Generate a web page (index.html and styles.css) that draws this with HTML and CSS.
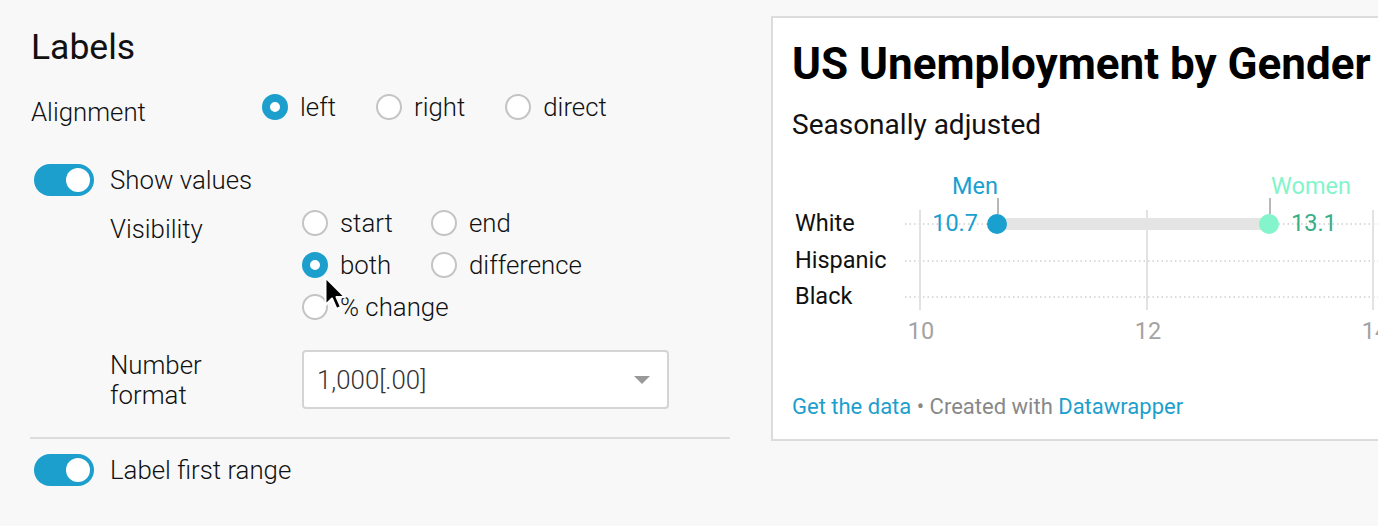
FILE: index.html
```html
<!DOCTYPE html>
<html>
<head>
<meta charset="utf-8">
<link rel="stylesheet" href="styles.css">
</head>
<body>
<div class="page">
  <div class="left">
    <h2 class="section-title">Labels</h2>
    <div class="align-row">
      <div class="field-label">Alignment</div>
      <div class="radio-line">
        <span class="radio checked"></span><span class="opt">left</span>
        <span class="radio"></span><span class="opt">right</span>
        <span class="radio"></span><span class="opt">direct</span>
      </div>
    </div>
    <div class="toggle-row">
      <span class="toggle"><span class="knob"></span></span>
      <span class="toggle-text">Show values</span>
    </div>
    <div class="sub">
      <div class="vis-row">
        <div class="sub-label vis-label">Visibility</div>
        <div class="radio-grid">
          <div class="ropt"><span class="radio"></span><span class="opt">start</span></div>
          <div class="ropt"><span class="radio"></span><span class="opt">end</span></div>
          <div class="ropt"><span class="radio checked"></span><span class="opt">both</span></div>
          <div class="ropt"><span class="radio"></span><span class="opt">difference</span></div>
          <div class="ropt"><span class="radio"></span><span class="opt">% change</span></div>
        </div>
      </div>
      <div class="num-row">
        <div class="sub-label num-label">Number<br>format</div>
        <div class="select">
          <span class="select-text">1,000[.00]</span>
          <span class="caret"></span>
        </div>
      </div>
    </div>
    <div class="divider"></div>
    <div class="toggle-row second">
      <span class="toggle"><span class="knob"></span></span>
      <span class="toggle-text">Label first range</span>
    </div>
  </div>

  <div class="panel">
    <h1 class="chart-title">US Unemployment by Gender</h1>
    <div class="chart-sub">Seasonally adjusted</div>
    <svg class="chart" width="620" height="180" viewBox="0 0 620 180">
      <g class="grid-h">
        <line x1="113" y1="59" x2="620" y2="59"/>
        <line x1="113" y1="96" x2="620" y2="96"/>
        <line x1="113" y1="132" x2="620" y2="132"/>
      </g>
      <g class="grid-v">
        <line x1="128" y1="45" x2="128" y2="145"/>
        <line x1="355" y1="45" x2="355" y2="145"/>
        <line x1="581" y1="45" x2="581" y2="145"/>
      </g>
      <g class="row-labels">
        <text x="3" y="66">White</text>
        <text x="3" y="103">Hispanic</text>
        <text x="3" y="139">Black</text>
      </g>
      <g class="axis">
        <text x="129" y="174">10</text>
        <text x="356" y="174">12</text>
        <text x="583" y="174">14</text>
      </g>
      <line class="range" x1="205" y1="59" x2="477" y2="59"/>
      <line class="tick" x1="206" y1="33" x2="206" y2="49"/>
      <line class="tick" x1="478" y1="33" x2="478" y2="49"/>
      <circle class="dot-men" cx="205" cy="59" r="10"/>
      <circle class="dot-women" cx="477" cy="59" r="10"/>
      <text class="val-men" x="186" y="66">10.7</text>
      <text class="val-women" x="499" y="66">13.1</text>
      <text class="lab-men" x="206" y="29">Men</text>
      <text class="lab-women" x="479" y="29">Women</text>
    </svg>
    <div class="chart-foot"><span class="link">Get the data</span> • Created with <span class="link">Datawrapper</span></div>
  </div>
</div>
<svg class="cursor" width="26" height="40" viewBox="0 0 26 40">
  <path d="M1.5 1.5 L1.5 29 L8 22.5 L12.5 33 L17 31 L12.5 21 L21 21 Z" fill="#000" stroke="#fff" stroke-width="2" stroke-linejoin="round"/>
</svg>
</body>
</html>
```

FILE: styles.css
```css
html, body {
  margin: 0;
  padding: 0;
  overflow: hidden;
  background: #f8f8f8;
  font-family: Roboto, "Liberation Sans", sans-serif;
  color: #1a1a1a;
}

.page {
  display: flex;
  align-items: flex-start;
  width: 1500px;
}

.left {
  width: 700px;
  margin-left: 30px;
  padding-top: 27px;
  font-weight: 300;
  color: #111;
}

.section-title {
  margin: 0 0 0 1px;
  font-size: 35.5px;
  line-height: 40px;
  font-weight: 400;
  color: #111;
}

.align-row {
  display: flex;
  margin-top: 20px;
  margin-left: 1px;
  height: 40px;
}

.field-label {
  width: 231px;
  font-size: 25.8px;
  line-height: 40px;
  padding-top: 5px;
  box-sizing: border-box;
}

.radio-line {
  display: flex;
  align-items: center;
  height: 40px;
}

.radio {
  display: inline-block;
  width: 26px;
  height: 26px;
  box-sizing: border-box;
  border: 2px solid #c4c4c4;
  border-radius: 50%;
  background: #fff;
  flex: none;
}

.radio.checked {
  border: 8px solid #1d9fcd;
  background: #fff;
}

.opt {
  font-size: 25.8px;
  margin-left: 12px;
  margin-right: 40px;
  white-space: nowrap;
}

.toggle-row {
  display: flex;
  align-items: center;
  margin-top: 37px;
  margin-left: 4px;
  height: 32px;
}

.toggle-row.second {
  margin-top: 15px;
}

.toggle {
  width: 60px;
  height: 32px;
  border-radius: 16px;
  background: #1d9fcd;
  display: flex;
  align-items: center;
  justify-content: flex-end;
  padding-right: 4px;
  box-sizing: border-box;
}

.knob {
  width: 24px;
  height: 24px;
  border-radius: 50%;
  background: #fff;
}

.toggle-text {
  font-size: 25.8px;
  margin-left: 16px;
}

.sub {
  margin-left: 80px;
  margin-top: 6px;
}

.vis-row {
  display: flex;
}

.sub-label {
  width: 192px;
  font-size: 25.8px;
}

.vis-label {
  line-height: 42px;
  padding-top: 6px;
}

.radio-grid {
  display: grid;
  grid-template-columns: 129px auto;
  grid-auto-rows: 42px;
}

.ropt {
  display: flex;
  align-items: center;
}

.ropt .opt {
  margin-right: 0;
}

.num-row {
  display: flex;
  margin-top: 22px;
}

.num-label {
  line-height: 30px;
}

.select {
  width: 367px;
  height: 59px;
  box-sizing: border-box;
  border: 2px solid #d4d4d4;
  border-radius: 4px;
  background: #fff;
  display: flex;
  align-items: center;
  justify-content: space-between;
  padding: 0 17px 0 13px;
}

.select-text {
  font-size: 25.8px;
  color: #333;
}

.caret {
  width: 0;
  height: 0;
  border-left: 8px solid transparent;
  border-right: 8px solid transparent;
  border-top: 8px solid #999;
}

.divider {
  height: 2px;
  background: #dcdcdc;
  margin-top: 27px;
}

.panel {
  margin-top: 16px;
  margin-left: 41px;
  width: 700px;
  height: 425px;
  box-sizing: border-box;
  border: 2px solid #dcdcdc;
  background: #fff;
  padding: 21px 0 0 19px;
  flex: none;
}

.chart-title {
  margin: 0;
  font-size: 44px;
  line-height: 50px;
  font-weight: 700;
  color: #000;
  white-space: nowrap;
}

.chart-sub {
  margin-top: 20px;
  font-size: 28px;
  line-height: 32px;
  color: #111;
}

.chart {
  display: block;
  margin-top: 24px;
  overflow: visible;
}

.chart text {
  font-family: Roboto, "Liberation Sans", sans-serif;
  font-size: 23.5px;
}

.grid-h line {
  stroke: #cfcfcf;
  stroke-width: 1.5;
  stroke-dasharray: 1.5 3;
}

.grid-v line {
  stroke: #e2e2e2;
  stroke-width: 2;
}

.row-labels text {
  fill: #111;
}

.axis text {
  fill: #a3a3a3;
  text-anchor: middle;
}

.range {
  stroke: #e4e4e4;
  stroke-width: 12;
}

.tick {
  stroke: #888;
  stroke-width: 1.2;
}

.dot-men {
  fill: #1aa0cf;
}

.dot-women {
  fill: #84f4cb;
}

.chart .val-men {
  fill: #1aa0cf;
  text-anchor: end;
}

.chart .val-women {
  fill: #3aae86;
}

.chart .lab-men {
  fill: #1aa0cf;
  text-anchor: end;
}

.chart .lab-women {
  fill: #84f4cb;
}

.chart-foot {
  margin-top: 49px;
  font-size: 22px;
  line-height: 26px;
  color: #888;
}

.link {
  color: #1d9fcd;
}

.cursor {
  position: absolute;
  left: 324px;
  top: 276px;
}
```
